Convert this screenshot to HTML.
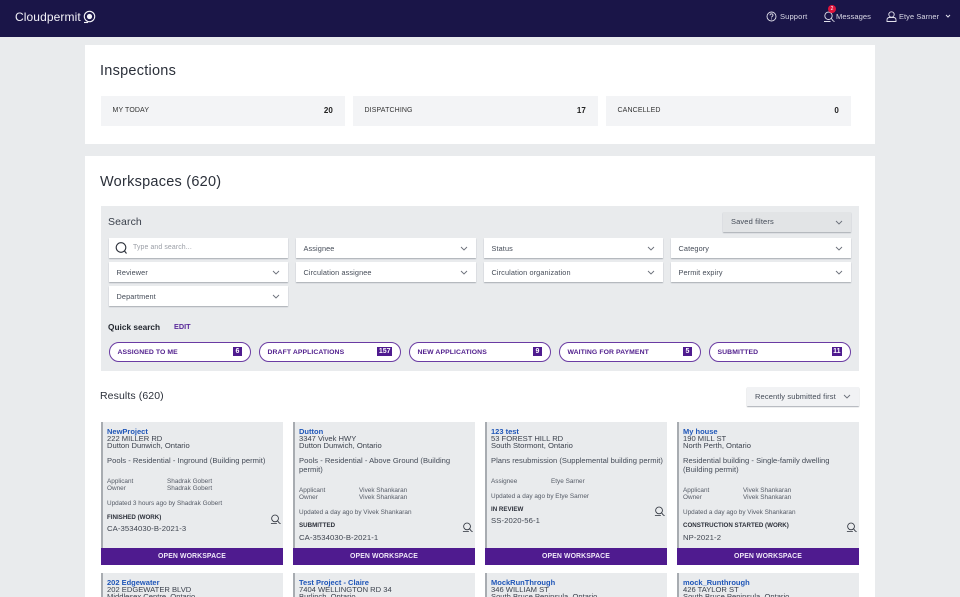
<!DOCTYPE html>
<html><head><meta charset="utf-8">
<style>
*{box-sizing:border-box;margin:0;padding:0}
html,body{width:960px;height:597px;overflow:hidden;background:#e9ebed;font-family:"Liberation Sans",sans-serif;color:#2f3440}
#root{position:relative;width:960px;height:597px;overflow:hidden;background:#e9ebed}
.a{position:absolute;white-space:nowrap}
#hd{left:0;top:0;width:960px;height:37px;background:#1a1548}
.w{background:#fff}
.tile{background:#f3f4f6;height:30px;top:96px;font-size:7px;letter-spacing:.12px;line-height:30px;padding:0 12px 0 11.5px;color:#333}
.tile b{float:right;font-size:8px;color:#222}
.in{background:#fff;height:20px;box-shadow:0 1px 1px #a9adb3;font-size:7.3px;letter-spacing:.12px;line-height:21px;padding-left:7.5px;color:#444b57}
.chev{position:absolute;right:8px;top:8px;width:8px;height:5px}
.pill{background:#fff;top:342px;width:142px;height:20px;border:1px solid #6a3ba3;border-radius:10px;font-size:6.85px;font-weight:bold;line-height:19.5px;padding-left:7.5px;color:#4f1d8c;letter-spacing:.08px}
.pill i{position:absolute;right:8px;top:4px;height:9px;min-width:9px;text-align:center;background:#4f1b8f;color:#fff;font-style:normal;font-size:7px;line-height:9px;padding:0 1.5px;letter-spacing:0}
.card{width:182px;height:143px;background:#e9ebed;border-left:2px solid #a8acb1;top:422px}
.card2{height:24px;top:573px;overflow:hidden}
.card .t{position:absolute;left:4px;white-space:nowrap}
.card .n{top:4.5px;font-size:7.5px;font-weight:bold;color:#1f56b8;line-height:9px}
.card .ad{top:13px;font-size:7.6px;line-height:7px;color:#3c424d}
.card .ty{top:34px;width:176px;font-size:7.6px;line-height:9px;white-space:normal;letter-spacing:.02px;color:#444b57}
.card .sm{font-size:6.4px;line-height:7px;color:#555b66}
.card .st{font-size:6.2px;font-weight:bold;color:#2c303a}
.card .id{font-size:7.7px;letter-spacing:.1px;color:#3f4550}
.btn{position:absolute;left:-2px;bottom:0;width:182px;height:17px;background:#4f1b8f;color:#f0e9f8;font-weight:bold;font-size:6.9px;line-height:17px;text-align:center;letter-spacing:.1px}
.ic{position:absolute;width:11px;height:11px}
</style></head><body>
<svg width="0" height="0" style="position:absolute"><defs>
<symbol id="chev" viewBox="0 0 8 5"><path d="M1 1l3 3 3-3" fill="none" stroke="#6b707a" stroke-width=".9"/></symbol>
<symbol id="msg" viewBox="0 0 12 12"><circle cx="5.500" cy="4.800" r="3.700" fill="none" stroke="currentColor" stroke-width=".9"/><path d="M1 10.500h6.500M8.300 7.500l1.700 2.200 1.500.9" fill="none" stroke="currentColor" stroke-width=".9"/></symbol>
</defs></svg>
<div id="root">
<div class="a" id="hd"></div>
<div class="a" style="left:15px;top:9px;font-size:12px;line-height:16px;color:#f3f2f8;letter-spacing:.1px">Cloudpermit</div>
<svg class="a" style="left:83px;top:9.500px" width="13" height="14" viewBox="0 0 13 14"><circle cx="6.500" cy="6.500" r="5.200" fill="none" stroke="#f3f2f8" stroke-width="1.100"/><circle cx="6.500" cy="6.500" r="2.600" fill="#f3f2f8"/><path d="M1 12.500h4" stroke="#f3f2f8" stroke-width="1.100"/></svg>

<svg class="a" style="left:766px;top:11px" width="11" height="11" viewBox="0 0 11 11"><circle cx="5.500" cy="5.500" r="4.500" fill="none" stroke="#e2e1ec" stroke-width=".9"/><path d="M4 4.300c0-2 3-2 3 0 0 1-1.500 1.200-1.500 2.200M5.500 7.500v.9" fill="none" stroke="#e2e1ec" stroke-width=".9"/></svg>
<div class="a" style="left:780px;top:11px;font-size:7.600px;line-height:12px;color:#d9d8e6;letter-spacing:.1px">Support</div>
<svg class="a" style="left:823px;top:11px;color:#e2e1ec" width="12" height="12"><use href="#msg"/></svg>
<div class="a" style="left:828px;top:5px;width:8px;height:8px;border-radius:50%;background:#e0143c;color:#fff;font-size:5px;line-height:8px;text-align:center">2</div>
<div class="a" style="left:836px;top:11px;font-size:7.600px;line-height:12px;color:#d9d8e6;letter-spacing:.05px">Messages</div>
<svg class="a" style="left:886px;top:11px" width="11" height="11" viewBox="0 0 11 11"><circle cx="5.500" cy="3.500" r="2.700" fill="none" stroke="#e2e1ec" stroke-width=".9"/><path d="M1 10.500V9c0-1.500 1-2.500 2.500-2.500h4C9 6.500 10 7.500 10 9v1.500z" fill="none" stroke="#e2e1ec" stroke-width=".9"/></svg>
<div class="a" style="left:899px;top:11px;font-size:7.400px;line-height:12px;color:#d9d8e6;letter-spacing:.1px">Etye Sarner</div>
<svg class="a" style="left:945px;top:14px" width="6" height="5" viewBox="0 0 6 5"><path d="M1 1l2 2 2-2" fill="none" stroke="#e2e1ec" stroke-width="1"/></svg>

<div class="a w" style="left:85px;top:45px;width:790px;height:99px"></div>
<div class="a" style="left:100px;top:63px;font-size:14.500px;line-height:17px;color:#2b303a;letter-spacing:.25px">Inspections</div>
<div class="a tile" style="left:101px;width:244px">MY TODAY<b>20</b></div>
<div class="a tile" style="left:353px;width:245px">DISPATCHING<b>17</b></div>
<div class="a tile" style="left:606px;width:245px">CANCELLED<b>0</b></div>

<div class="a w" style="left:85px;top:156px;width:790px;height:441px"></div>
<div class="a" style="left:100px;top:174px;font-size:14.500px;line-height:17px;color:#2b303a;letter-spacing:.25px">Workspaces (620)</div>
<div class="a" style="left:101px;top:206px;width:758px;height:165px;background:#e9ebed"></div>
<div class="a" style="left:108px;top:215px;font-size:10.500px;line-height:14px;color:#3a404b;letter-spacing:.1px">Search</div>
<div class="a in" style="left:723px;top:212px;width:128px;background:#e2e4e6;padding-left:8px;font-size:7.500px;line-height:20px">Saved filters<svg class="chev"><use href="#chev"/></svg></div>

<div class="a in" style="left:109px;top:238px;width:179px;padding-left:24px;color:#9a9ea6;font-size:6.900px;line-height:20.500px">Type and search...</div>
<svg class="a" style="left:115px;top:241px" width="13" height="14" viewBox="0 0 13 14"><circle cx="6" cy="6.500" r="4.800" fill="none" stroke="#2b303a" stroke-width="1.100"/><path d="M9.500 10l2 2.500" stroke="#2b303a" stroke-width="1.100"/></svg>
<div class="a in" style="left:296px;top:238px;width:180px">Assignee<svg class="chev"><use href="#chev"/></svg></div>
<div class="a in" style="left:484px;top:238px;width:179px">Status<svg class="chev"><use href="#chev"/></svg></div>
<div class="a in" style="left:671px;top:238px;width:180px">Category<svg class="chev"><use href="#chev"/></svg></div>
<div class="a in" style="left:109px;top:262px;width:179px">Reviewer<svg class="chev"><use href="#chev"/></svg></div>
<div class="a in" style="left:296px;top:262px;width:180px">Circulation assignee<svg class="chev"><use href="#chev"/></svg></div>
<div class="a in" style="left:484px;top:262px;width:179px">Circulation organization<svg class="chev"><use href="#chev"/></svg></div>
<div class="a in" style="left:671px;top:262px;width:180px">Permit expiry<svg class="chev"><use href="#chev"/></svg></div>
<div class="a in" style="left:109px;top:286px;width:179px">Department<svg class="chev"><use href="#chev"/></svg></div>

<div class="a" style="left:108px;top:321px;font-size:8.300px;line-height:12px;font-weight:bold;color:#23272f">Quick search</div>
<div class="a" style="left:174px;top:321px;font-size:7.300px;line-height:12.500px;font-weight:bold;color:#5a2a9a">EDIT</div>

<div class="a pill" style="left:109px">ASSIGNED TO ME<i>6</i></div>
<div class="a pill" style="left:259px">DRAFT APPLICATIONS<i>157</i></div>
<div class="a pill" style="left:409px">NEW APPLICATIONS<i>9</i></div>
<div class="a pill" style="left:559px">WAITING FOR PAYMENT<i>5</i></div>
<div class="a pill" style="left:709px">SUBMITTED<i>11</i></div>

<div class="a" style="left:100px;top:390px;font-size:10.500px;line-height:13px;color:#2b303a;letter-spacing:.1px">Results (620)</div>
<div class="a in" style="left:747px;top:387px;width:112px;height:19px;background:#f1f2f4;font-size:7.500px;line-height:19px;padding-left:8px">Recently submitted first<svg class="chev" style="top:7px"><use href="#chev"/></svg></div>

<div class="a card" style="left:101px">
<div class="t n">NewProject</div><div class="t ad">222 MILLER RD<br>Dutton Dunwich, Ontario</div>
<div class="t ty">Pools - Residential - Inground (Building permit)</div>
<div class="t sm" style="top:56px">Applicant<br>Owner</div><div class="t sm" style="top:56px;left:64px">Shadrak Gobert<br>Shadrak Gobert</div>
<div class="t sm" style="top:78px">Updated 3 hours ago by Shadrak Gobert</div>
<div class="t st" style="top:92px">FINISHED (WORK)</div><div class="t id" style="top:102px">CA-3534030-B-2021-3</div>
<svg class="ic" style="left:167px;top:92px;color:#2b303a"><use href="#msg"/></svg>
<div class="btn">OPEN WORKSPACE</div></div>

<div class="a card" style="left:293px">
<div class="t n">Dutton</div><div class="t ad">3347 Vivek HWY<br>Dutton Dunwich, Ontario</div>
<div class="t ty">Pools - Residential - Above Ground (Building permit)</div>
<div class="t sm" style="top:65px">Applicant<br>Owner</div><div class="t sm" style="top:65px;left:64px">Vivek Shankaran<br>Vivek Shankaran</div>
<div class="t sm" style="top:87px">Updated a day ago by Vivek Shankaran</div>
<div class="t st" style="top:100px">SUBMITTED</div><div class="t id" style="top:111px">CA-3534030-B-2021-1</div>
<svg class="ic" style="left:167px;top:100px;color:#2b303a"><use href="#msg"/></svg>
<div class="btn">OPEN WORKSPACE</div></div>

<div class="a card" style="left:485px">
<div class="t n">123 test</div><div class="t ad">53 FOREST HILL RD<br>South Stormont, Ontario</div>
<div class="t ty">Plans resubmission (Supplemental building permit)</div>
<div class="t sm" style="top:56px">Assignee</div><div class="t sm" style="top:56px;left:64px">Etye Sarner</div>
<div class="t sm" style="top:71px">Updated a day ago by Etye Sarner</div>
<div class="t st" style="top:84px">IN REVIEW</div><div class="t id" style="top:94px">SS-2020-56-1</div>
<svg class="ic" style="left:167px;top:84px;color:#2b303a"><use href="#msg"/></svg>
<div class="btn">OPEN WORKSPACE</div></div>

<div class="a card" style="left:677px">
<div class="t n">My house</div><div class="t ad">190 MILL ST<br>North Perth, Ontario</div>
<div class="t ty">Residential building - Single-family dwelling (Building permit)</div>
<div class="t sm" style="top:65px">Applicant<br>Owner</div><div class="t sm" style="top:65px;left:64px">Vivek Shankaran<br>Vivek Shankaran</div>
<div class="t sm" style="top:87px">Updated a day ago by Vivek Shankaran</div>
<div class="t st" style="top:100px">CONSTRUCTION STARTED (WORK)</div><div class="t id" style="top:111px">NP-2021-2</div>
<svg class="ic" style="left:167px;top:100px;color:#2b303a"><use href="#msg"/></svg>
<div class="btn">OPEN WORKSPACE</div></div>

<div class="a card card2" style="left:101px"><div class="t n">202 Edgewater</div><div class="t ad">202 EDGEWATER BLVD<br>Middlesex Centre, Ontario</div></div>
<div class="a card card2" style="left:293px"><div class="t n">Test Project - Claire</div><div class="t ad">7404 WELLINGTON RD 34<br>Burlinch, Ontario</div></div>
<div class="a card card2" style="left:485px"><div class="t n">MockRunThrough</div><div class="t ad">346 WILLIAM ST<br>South Bruce Peninsula, Ontario</div></div>
<div class="a card card2" style="left:677px"><div class="t n">mock_Runthrough</div><div class="t ad">426 TAYLOR ST<br>South Bruce Peninsula, Ontario</div></div>
</div>
</body></html>
